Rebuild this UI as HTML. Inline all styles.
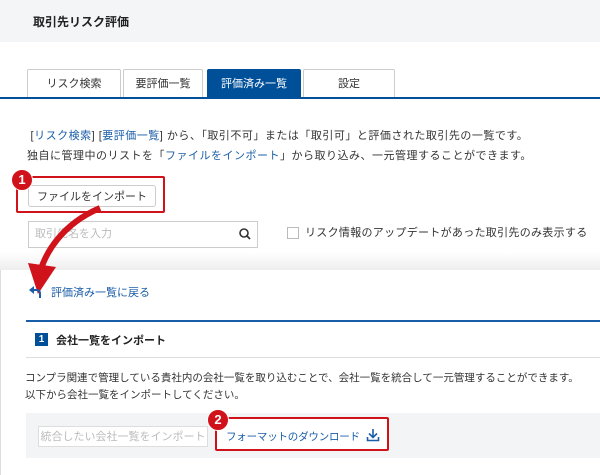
<!DOCTYPE html><html><head><meta charset="utf-8"><style>
body{margin:0;width:600px;height:475px;position:relative;background:#fff;font-family:"Liberation Sans","Noto Sans CJK JP",sans-serif;color:#333;overflow:hidden}
.a{position:absolute}
.tab{position:absolute;top:69px;height:28px;border:1px solid #ccc;border-bottom:none;background:#fff;font-size:11px;text-align:center;line-height:28px;box-sizing:border-box;border-radius:2px 2px 0 0}
.bl{color:#1a5ea8}
.badge{position:absolute;width:20px;height:20px;border-radius:50%;background:#d0121b;color:#fff;font-weight:bold;font-size:13px;text-align:center;line-height:20px;border:1px solid #fff}
</style></head><body>
<div class="a" style="left:0;top:0;width:600px;height:42px;background:#f4f5f7"></div>
<div class="a" style="left:33px;top:13px;font-size:12px;font-weight:bold;color:#222">取引先リスク評価</div>
<div class="tab" style="left:27px;width:94px">リスク検索</div>
<div class="tab" style="left:123px;width:80px">要評価一覧</div>
<div class="tab" style="left:207px;width:94px;background:#004f99;border-color:#004f99;color:#fff">評価済み一覧</div>
<div class="tab" style="left:303px;width:92px">設定</div>
<div class="a" style="left:0;top:97px;width:600px;height:2px;background:#004f99"></div>
<div class="a" style="left:27px;top:126px;font-size:11px;line-height:20px;white-space:nowrap;letter-spacing:0.5px">&nbsp;[<span class="bl">リスク検索</span>] [<span class="bl">要評価一覧</span>] から、「取引不可」または「取引可」と評価された取引先の一覧です。<br>独自に管理中のリストを「<span class="bl">ファイルをインポート</span>」から取り込み、一元管理することができます。</div>
<div class="a" style="left:16px;top:176px;width:145px;height:33px;border:2px solid #d0121b;border-radius:2px"></div>
<div class="a" style="left:28px;top:185px;width:128px;height:22px;border:1px solid #ccc;border-radius:3px;font-size:11px;line-height:22px;text-align:center;box-sizing:border-box;background:#fff">ファイルをインポート</div>
<div class="badge" style="left:11px;top:169px">1</div>
<div class="a" style="left:28px;top:221px;width:230px;height:27px;border:1px solid #ccc;box-sizing:border-box;font-size:11px;color:#bbb;line-height:25px;padding-left:6px">取引先名を入力</div>
<svg class="a" style="left:238px;top:227px" width="14" height="14"><circle cx="6" cy="6" r="4" fill="none" stroke="#333" stroke-width="1.6"/><line x1="9" y1="9" x2="12" y2="12" stroke="#333" stroke-width="1.8"/></svg>
<div class="a" style="left:287px;top:227px;width:10px;height:10px;border:1px solid #bbb"></div>
<div class="a" style="left:305px;top:224px;font-size:11px;letter-spacing:0.3px">リスク情報のアップデートがあった取引先のみ表示する</div>
<div class="a" style="left:0;top:252px;width:600px;height:18px;background:linear-gradient(#fff,#eee)"></div>
<div class="a" style="left:0;top:270px;width:600px;height:205px;border-left:1px solid #ddd;box-sizing:border-box"></div>
<svg class="a" style="left:0;top:200px" width="130" height="110"><path d="M100 8 C60 25 45 55 40 72" fill="none" stroke="#d0121b" stroke-width="6"/><polygon points="28,63 56,67 38,94" fill="#d0121b"/></svg>
<svg class="a" style="left:29px;top:285px" width="14" height="14"><path d="M4 5 H8 Q11 5 11 9 V13" fill="none" stroke="#1a5ea8" stroke-width="2"/><polygon points="0,5 5,1 5,9" fill="#1a5ea8"/></svg>
<div class="a bl" style="left:51px;top:284px;font-size:11px">評価済み一覧に戻る</div>
<div class="a" style="left:26px;top:320px;width:574px;height:2px;background:#1a5ea8"></div>
<div class="a" style="left:35px;top:333px;width:13px;height:13px;background:#004f99;color:#fff;font-size:10px;font-weight:bold;text-align:center;line-height:13px">1</div>
<div class="a" style="left:56px;top:332px;font-size:11px;font-weight:bold;color:#222">会社一覧をインポート</div>
<div class="a" style="left:26px;top:357px;width:574px;height:1px;background:#ddd"></div>
<div class="a" style="left:25px;top:370px;font-size:10.5px;line-height:17px;white-space:nowrap">コンプラ関連で管理している貴社内の会社一覧を取り込むことで、会社一覧を統合して一元管理することができます。<br>以下から会社一覧をインポートしてください。</div>
<div class="a" style="left:26px;top:413px;width:574px;height:45px;background:#f3f4f6"></div>
<div class="a" style="left:38px;top:426px;width:170px;height:21px;border:1px solid #ddd;background:#fff;font-size:11px;color:#bbb;line-height:21px;text-align:center;box-sizing:border-box">統合したい会社一覧をインポート</div>
<div class="a" style="left:215px;top:417px;width:174px;height:34px;border:2px solid #d0121b;box-sizing:border-box;background:#fff;border-radius:2px"></div>
<div class="a bl" style="left:226px;top:429px;font-size:10.5px;letter-spacing:-0.2px">フォーマットのダウンロード</div>
<svg class="a" style="left:366px;top:428px" width="14" height="14"><path d="M7 1 V9 M3 5.5 L7 9.5 L11 5.5 M1.5 9 V12.5 H12.5 V9" fill="none" stroke="#1a5ea8" stroke-width="1.6"/></svg>
<div class="badge" style="left:207px;top:409px">2</div>
</body></html>
